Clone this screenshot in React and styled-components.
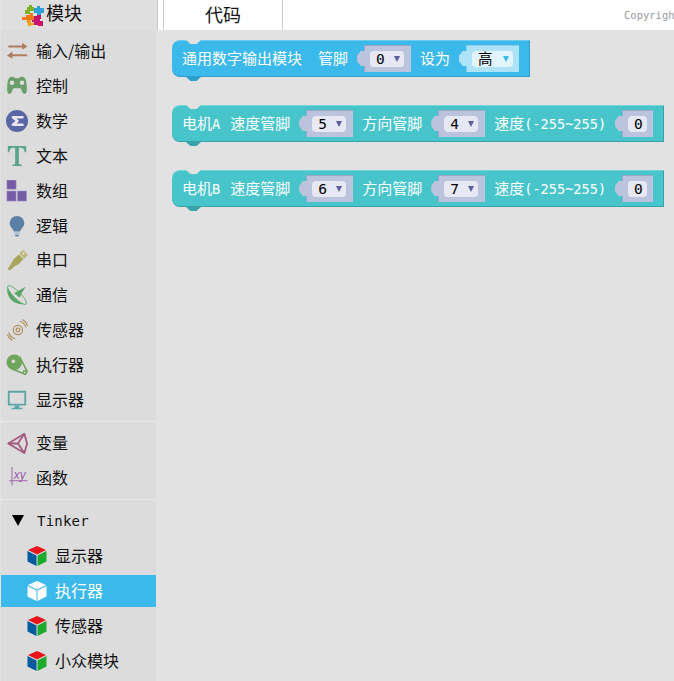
import React from "react";
import styled, { createGlobalStyle } from "styled-components";

const CJK = `"Noto Sans CJK SC", "Noto Sans", sans-serif`;
const MONO = `"DejaVu Sans Mono", "Noto Sans CJK SC", monospace`;

const GlobalStyle = createGlobalStyle`
  html, body {
    margin: 0;
    padding: 0;
    height: 100%;
    overflow: hidden;
    background: #e2e2e2;
  }
  #root {
    height: 681px;
  }
`;

const Page = styled.div`
  display: flex;
  width: 674px;
  height: 681px;
  overflow: hidden;
  font-family: ${CJK};
  background: #e2e2e2;
`;

const Sidebar = styled.aside`
  flex: none;
  width: 158px;
  display: flex;
  flex-direction: column;
`;

const SidebarHead = styled.div`
  flex: none;
  height: 30px;
  margin-left: 2px;
  box-sizing: border-box;
  border-right: 1px solid #c8c8c8;
  background: #dfdfdf;
  display: flex;
  align-items: center;
  padding-left: 20px;
  gap: 1px;
  font-size: 18px;
  color: #111;

  span {
    margin-bottom: 7px;
  }
`;

const SidebarBody = styled.div`
  flex: 1;
  width: 155px;
  margin-left: 1px;
  padding-top: 5px;
  background: #dcdcdc;
`;

const RowText = styled.span`
  margin-bottom: 2px;
`;

const Row = styled.div`
  height: 32px;
  margin-bottom: 2.92px;
  display: flex;
  align-items: center;
  gap: ${(p) => (p.$nested ? "7px" : "8px")};
  padding-left: ${(p) => (p.$nested ? "25px" : "5px")};
  font-size: 16px;
  color: ${(p) => (p.$active ? "#fff" : "#111")};
  background: ${(p) => (p.$active ? "#3bb9ea" : "transparent")};
`;

const IconBox = styled.svg`
  flex: none;
  display: block;
`;

const Divider = styled.div`
  height: 1px;
  margin: 5px 0;
  background: #e8e8e8;
`;

const TreeLabel = styled.span`
  font-family: ${MONO};
  font-size: 14px;
  letter-spacing: 0.2px;
`;

const Arrow = styled.i`
  width: 0;
  height: 0;
  margin-left: 6px;
  margin-right: 5px;
  border-left: 6px solid transparent;
  border-right: 6px solid transparent;
  border-top: 11px solid #000;
`;

const Main = styled.main`
  flex: 1;
  min-width: 0;
  display: flex;
  flex-direction: column;
`;

const TabBar = styled.div`
  flex: none;
  height: 30px;
  background: #fff;
  padding-left: 5px;
  display: flex;
  overflow: hidden;
`;

const Tab = styled.div`
  flex: none;
  width: 118px;
  height: 27px;
  padding-bottom: 3px;
  border-left: 1px solid #ccc;
  border-right: 1px solid #ccc;
  display: flex;
  align-items: center;
  justify-content: center;
  font-size: 18px;
  color: #111;
`;

const Copyright = styled.div`
  flex: none;
  margin-left: 341px;
  padding-top: 8px;
  font-family: ${MONO};
  font-size: 10.5px;
  line-height: 14px;
  color: #9a9aa0;
  white-space: nowrap;
`;

const Workspace = styled.div`
  flex: 1;
  padding: 10px 0 0 14px;
  display: flex;
  flex-direction: column;
  align-items: flex-start;
  gap: 28px;
`;

const Block = styled.div`
  --block: ${(p) => p.$color};
  position: relative;
  box-sizing: border-box;
  height: 37px;
  display: inline-flex;
  align-items: center;
  padding: 0 10px;
  background: var(--block);
  border-top: 1px solid ${(p) => p.$light};
  border-right: 1px solid ${(p) => p.$dark};
  border-bottom: 1px solid ${(p) => p.$dark};
  border-radius: 8px 0 0 8px;
  color: #fff;
  font-size: 15px;
  white-space: nowrap;

  &::before {
    content: "";
    position: absolute;
    left: 14px;
    top: -1px;
    width: 15px;
    height: 4px;
    background: #e2e2e2;
    clip-path: polygon(0 0, 100% 0, 70% 100%, 30% 100%);
  }

  &::after {
    content: "";
    position: absolute;
    left: 14px;
    bottom: -5px;
    width: 15px;
    height: 4px;
    background: ${(p) => p.$dark};
    clip-path: polygon(0 0, 100% 0, 70% 100%, 30% 100%);
  }
`;

const Label = styled.span`
  margin-right: ${(p) => p.$gap || 0}px;
  margin-bottom: 2px;
`;

const Latin = styled.span`
  font-family: ${MONO};
  font-size: 13.6px;
`;

const Socket = styled.div`
  position: relative;
  flex: none;
  box-sizing: border-box;
  width: ${(p) => p.$width}px;
  height: 27px;
  margin: 0 9px 0 16px;
  padding-left: 5px;
  display: flex;
  align-items: center;
  background: ${(p) => p.$fill};
  border-top: 1px solid ${(p) => p.$edge};
  border-left: 1px solid ${(p) => p.$edge};

  &:last-child {
    margin-right: 0;
  }

  &::before {
    content: "";
    position: absolute;
    left: -8px;
    top: 5px;
    width: 8px;
    height: 15px;
    background: ${(p) => p.$fill};
    clip-path: polygon(100% 0, 45% 0, 30% 12%, 0 30%, 0 70%, 30% 88%, 45% 100%, 100% 100%);
  }
`;

const Pill = styled.div`
  box-sizing: border-box;
  width: ${(p) => p.$width}px;
  height: 16px;
  display: flex;
  align-items: center;
  justify-content: space-between;
  padding: 0 4px 0 6px;
  border-radius: 4px;
  background: ${(p) => p.$fill};
  color: #000;
  font-family: ${MONO};
  font-size: 14.5px;
  line-height: 1;
`;

const Caret = styled.i`
  width: 0;
  height: 0;
  border-left: 3.5px solid transparent;
  border-right: 3.5px solid transparent;
  border-top: 6px solid ${(p) => p.$color};
`;

const Svg = ({ size = 22, box = "0 0 24 24", children }) => (
  <IconBox width={size} height={size} viewBox={box}>
    {children}
  </IconBox>
);

const icons = {
  arrows: (
    <g fill="#b07d62">
      <path d="M2.500 6h15V3l6 4-6 3.500V8.300h-15z" />
      <path d="M23 16H7v-3l-6 4.500L7 21v-2.700h16z" transform="translate(0 -.5)" />
    </g>
  ),
  pad: (
    <path
      fill="#6b9e6b"
      fillRule="evenodd"
      d="M7 2c1.800 0 2.600 1.500 3.500 1.500h3C14.400 3.500 15.200 2 17 2c3.500 0 5 2.500 5.500 8 .4 4 .4 8-.5 9.500-1.200 1.500-3 1-4-.5l-2-4.500H8L6 19c-1 1.500-2.800 2-4 .5-.9-1.500-.9-5.500-.5-9.500C2 4.500 3.500 2 7 2zM6.500 6a2.500 2.500 0 1 0 0 5 2.500 2.500 0 0 0 0-5zm11 0a2.500 2.500 0 1 0 0 5 2.500 2.500 0 0 0 0-5z"
    />
  ),
  sum: (
    <g>
      <circle cx="12" cy="12" r="12" fill="#5b67a5" />
      <path
        d="M18 8H7.500l5 4-5 4H18"
        fill="none"
        stroke="#e8e8f2"
        strokeWidth="2.800"
        strokeLinecap="round"
        strokeLinejoin="round"
      />
    </g>
  ),
  text: (
    <path
      fill="#5ba58c"
      d="M2 1h20v7h-1.500c-.5-3-1.500-5-4-5H14v17c0 1 1 1.500 3 1.500V23H7v-1.500c2 0 3-.5 3-1.500V3H7.500c-2.500 0-3.500 2-4 5H2z"
    />
  ),
  list: (
    <g fill="#745ba5" stroke="#a99cc6" strokeWidth=".6">
      <rect x="1" y="0" width="10" height="10" />
      <rect x="1" y="12" width="10" height="11" />
      <rect x="12.500" y="12" width="10" height="11" />
    </g>
  ),
  bulb: (
    <g>
      <path fill="#5b80a5" d="M12 1a8 8 0 0 1 8 8c0 4-3.500 5.500-4.500 9h-7C7.500 14.500 4 13 4 9a8 8 0 0 1 8-8z" />
      <rect x="9" y="19" width="6" height="1.800" fill="#a9bfd6" />
      <rect x="10" y="21.500" width="4" height="1.800" fill="#5b80a5" />
    </g>
  ),
  usb: (
    <g fill="#a5a55b">
      <path d="M14 6l5 5-5.500 5.500c-1 1-2 1-3 1.500L4 23.500 1.800 21.800 7 14c.5-1 .5-2 1.500-3z" />
      <path d="M18.500 1L24 6.500l-4 4L14.500 5z" fill="#b9b97a" />
      <rect x="18" y="4" width="2" height="2" fill="#dcdcdc" transform="rotate(45 19 5)" />
    </g>
  ),
  dish: (
    <g>
      <path fill="#5ba56b" d="M2 2C-1 12 6 24 22 22z" />
      <ellipse cx="12" cy="12" rx="14" ry="3.800" fill="#dcdcdc" stroke="#5ba56b" strokeWidth=".9" transform="rotate(45 12 12)" />
      <path fill="#5ba56b" d="M9 10l6 5 2-5 4.500-7L14 7z" />
    </g>
  ),
  sensor: (
    <g fill="none" stroke="#b09060" strokeWidth="1.300">
      <circle cx="13" cy="12" r="2" />
      <circle cx="13" cy="12" r="5" />
      <path d="M15 2.500a10 10 0 0 1 7 7M18 .5a13 13 0 0 1 5.500 7M10 21.500a10 10 0 0 1-7-7M7 23.500A13 13 0 0 1 1.500 17" />
    </g>
  ),
  motor: (
    <g>
      <circle cx="9" cy="9" r="8.500" fill="#6fa55b" />
      <circle cx="8" cy="8" r="2" fill="#dcdcdc" />
      <path d="M15 3l8 16-2 3-15-6" fill="none" stroke="#6fa55b" strokeWidth="1.800" />
      <circle cx="20.500" cy="20" r="2.500" fill="#6fa55b" />
      <circle cx="20.500" cy="20" r="1" fill="#dcdcdc" />
    </g>
  ),
  screen: (
    <g>
      <path fill="#5ba5a5" fillRule="evenodd" d="M2 2h20v16H2zM4 4v12h16V4z" />
      <path fill="#5ba5a5" d="M9.500 18h5v2.500H18V22H6v-1.500h3.500z" />
    </g>
  ),
  unity: (
    <g fill="none" stroke="#a55b80" strokeWidth="2" strokeLinejoin="round">
      <path d="M2.500 12.500L20 2l3 10.500-3 10.500z" />
      <path d="M2.500 12.500H13M13 12.500L20 2M13 12.500L20 23" />
    </g>
  ),
  func: (
    <g>
      <path d="M6.500 0v20M3.500 15h20" stroke="#995ba5" strokeWidth="1" fill="none" />
      <text x="8.500" y="13.500" fontFamily="Liberation Sans, sans-serif" fontStyle="italic" fontSize="13" fill="#995ba5">
        xy
      </text>
    </g>
  ),
};

const Cube = ({ plain }) => (
  <Svg box="0 0 22 22">
    <path d="M11 1l9 4-9 4.500L2 5z" fill={plain ? "#fff" : "#e8141c"} />
    <path d="M1.500 6l9 4.500V21l-9-4.500z" fill={plain ? "#fff" : "#005a9e"} />
    <path d="M20.500 6l-9 4.500V21l9-4.500z" fill={plain ? "#fff" : "#1dab2e"} />
  </Svg>
);

const PuzzleLogo = () => (
  <Svg size={23} box="0 0 23 23">
    <path d="M3 6h2V3h2V1h3v2h2v4H8v3H3z" fill="#7cb21f" />
    <path d="M12 4h3V2h3v2h4v5h-3v2h-4V9h-3z" fill="#2f9fdc" />
    <path d="M4 11h4V9h3v3h1v4H9v3H5v-3H0v-3h4z" fill="#f07a12" />
    <path d="M12 12h3v-1h4v4h-1v2h3v5h-5v-1h-4v-3h-2v-2h2z" fill="#c9126c" />
    <path d="M6 16h3v3h3v2H9v1H6z" fill="#f4a012" />
  </Svg>
);

const upper = [
  ["arrows", "输入/输出"],
  ["pad", "控制"],
  ["sum", "数学"],
  ["text", "文本"],
  ["list", "数组"],
  ["bulb", "逻辑"],
  ["usb", "串口"],
  ["dish", "通信"],
  ["sensor", "传感器"],
  ["motor", "执行器"],
  ["screen", "显示器"],
];
const lower = [
  ["unity", "变量"],
  ["func", "函数"],
];
const tinker = ["显示器", "执行器", "传感器", "小众模块"];

const PURPLE = { fill: "#bcc3dc", edge: "#9aa4c6", pill: "#e6e9f4", caret: "#5b5fa0" };
const SKY = { fill: "#aee2f6", edge: "#8acce8", pill: "#e2f5fc", caret: "#3bb9ea" };

const Dropdown = ({ value, theme = PURPLE, width = 47, pill = 34 }) => (
  <Socket $width={width} $fill={theme.fill} $edge={theme.edge}>
    <Pill $width={pill} $fill={theme.pill}>
      {value}
      <Caret $color={theme.caret} />
    </Pill>
  </Socket>
);

const NumberField = ({ value }) => (
  <Socket $width={31} $fill={PURPLE.fill} $edge={PURPLE.edge}>
    <Pill $width={19} $fill={PURPLE.pill}>
      {value}
    </Pill>
  </Socket>
);

const MotorBlock = ({ letter, speed, dir }) => (
  <Block $color="#48c5cb" $light="#74d4d9" $dark="#37a3a8">
    <Label $gap={10}>
      电机<Latin>{letter}</Latin>
    </Label>
    <Label>速度管脚</Label>
    <Dropdown value={speed} />
    <Label>方向管脚</Label>
    <Dropdown value={dir} />
    <Label>
      速度<Latin>(-255~255)</Latin>
    </Label>
    <NumberField value="0" />
  </Block>
);

export default function App() {
  return (
    <Page>
      <GlobalStyle />
      <Sidebar>
        <SidebarHead>
          <PuzzleLogo />
          <span>模块</span>
        </SidebarHead>
        <SidebarBody>
          {upper.map(([icon, label]) => (
            <Row key={label}>
              <Svg>{icons[icon]}</Svg>
              <RowText>{label}</RowText>
            </Row>
          ))}
          <Divider />
          {lower.map(([icon, label]) => (
            <Row key={label}>
              <Svg>{icons[icon]}</Svg>
              <RowText>{label}</RowText>
            </Row>
          ))}
          <Divider />
          <Row>
            <Arrow />
            <TreeLabel>Tinker</TreeLabel>
          </Row>
          {tinker.map((label, i) => (
            <Row key={label} $nested $active={i === 1}>
              <Cube plain={i === 1} />
              <RowText>{label}</RowText>
            </Row>
          ))}
        </SidebarBody>
      </Sidebar>
      <Main>
        <TabBar>
          <Tab>代码</Tab>
          <Copyright>Copyright</Copyright>
        </TabBar>
        <Workspace>
          <Block $color="#3bb9ea" $light="#6dcbef" $dark="#2f9fcb">
            <Label $gap={16}>通用数字输出模块</Label>
            <Label>管脚</Label>
            <Dropdown value="0" />
            <Label>设为</Label>
            <Dropdown value="高" theme={SKY} width={53} pill={41} />
          </Block>
          <MotorBlock letter="A" speed="5" dir="4" />
          <MotorBlock letter="B" speed="6" dir="7" />
        </Workspace>
      </Main>
    </Page>
  );
}
